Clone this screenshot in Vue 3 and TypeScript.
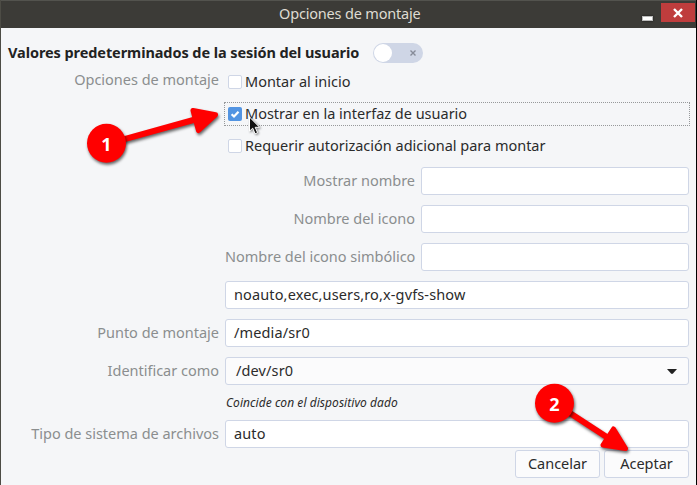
<script setup lang="ts">
import { ref } from 'vue'

interface Option { label: string; checked: boolean; focused: boolean }

const options = ref<Option[]>([
  { label: 'Montar al inicio', checked: false, focused: false },
  { label: 'Mostrar en la interfaz de usuario', checked: true, focused: true },
  { label: 'Requerir autorización adicional para montar', checked: false, focused: false },
])

const names = ['Mostrar nombre', 'Nombre del icono', 'Nombre del icono simbólico']
</script>

<template>
  <main class="window">
    <header class="titlebar">
      <h1 class="title">Opciones de montaje</h1>
      <span class="minimize"></span>
      <button class="close" type="button">
        <svg width="10" height="10" viewBox="0 0 10 10"><path d="M1 1 9 9M9 1 1 9" stroke="#fff" stroke-width="2.4" /></svg>
      </button>
    </header>

    <section class="defaults">
      <strong class="heading">Valores predeterminados de la sesión del usuario</strong>
      <span class="switch">
        <span class="knob"></span>
        <svg class="off" width="6" height="6" viewBox="0 0 6 6"><path d="M.5 .5 5.5 5.5M5.5 .5 .5 5.5" stroke="#868b98" stroke-width="1.4" /></svg>
      </span>
    </section>

    <section class="form">
      <div class="label top">Opciones de montaje</div>
      <div class="options">
        <div v-for="o in options" :key="o.label" class="option" :class="{ focused: o.focused }">
          <span class="box" :class="{ on: o.checked }">
            <svg v-if="o.checked" width="14" height="14" viewBox="0 0 14 14"><path d="M3.6 7.2 6 9.5 10.5 4.7" fill="none" stroke="#fff" stroke-width="2.2" /></svg>
          </span>
          <span class="caption">{{ o.label }}</span>
        </div>
      </div>

      <div class="names">
        <template v-for="n in names" :key="n">
          <div class="label">{{ n }}</div>
          <div class="entry"></div>
        </template>
      </div>

      <div class="entry wide">noauto,exec,users,ro,x-gvfs-show</div>

      <div class="label">Punto de montaje</div>
      <div class="entry">/media/sr0</div>

      <div class="label">Identificar como</div>
      <div class="entry combo">
        <span>/dev/sr0</span>
        <svg width="10" height="5" viewBox="0 0 10 5"><path d="M0 0h10L6 4.5Q5 5.4 4 4.5Z" fill="#222" /></svg>
      </div>

      <em class="hint">Coincide con el dispositivo dado</em>

      <div class="label">Tipo de sistema de archivos</div>
      <div class="entry">auto</div>
    </section>

    <footer class="actions">
      <button class="btn" type="button">Cancelar</button>
      <button class="btn" type="button">Aceptar</button>
    </footer>

    <svg class="overlay" width="697" height="485" viewBox="0 0 697 485">
      <path class="cursor" d="M249.5 117v14.2l3.2-3 2.4 5.6 2.500-1.100-2.400-5.400h4.400z" />
      <g class="mark">
        <path class="shaft" d="M120 140.300 197 119" />
        <path class="head" d="M193 110.500 215.500 114.800 198.500 130.500Z" />
      </g>
      <g class="mark">
        <path class="shaft" d="M566 410.500 609 438.500" />
        <path class="head" d="M613.500 429 625.500 448.500 603 445Z" />
      </g>
      <g class="mark"><circle cx="106.500" cy="143.300" r="19.500" /></g>
      <g class="mark"><circle cx="554.500" cy="403.300" r="19.500" /></g>
      <text class="num" x="106.300" y="150.500">1</text>
      <text class="num" x="554.300" y="410.500">2</text>
    </svg>
  </main>
</template>

<style>
body { overflow: hidden; }
</style>

<style scoped>
* { box-sizing: border-box; }
.window {
  position: relative;
  width: 697px;
  height: 485px;
  background: #f5f6f8;
  border-left: 1px solid #4d4c45;
  border-right: 1px solid #000;
  color: #2b2b2b;
  font: 14.5px/20px "Noto Sans", sans-serif;
  letter-spacing: -0.01px;
  white-space: nowrap;
}
.titlebar {
  display: grid;
  grid-template-columns: 271px 155px 1fr auto auto;
  align-items: start;
  height: 28px;
  background: #3c3b37;
  border-top: 1px solid #53534e;
}
.title { grid-column: 2; margin: 2px 0 0 7px; font-size: 14.5px; line-height: 20px; font-weight: 400; letter-spacing: -0.18px; color: #dfdbd2; }
.minimize { grid-column: 4; width: 11px; height: 5px; margin: 15px 8px 0 0; background: #fff; border: 1px solid #bbb; box-shadow: 0 0 2px #111; }
.close {
  display: flex;
  align-items: center;
  justify-content: center;
  width: 34px;
  height: 19px;
  margin: 2px 1px 0 0;
  padding: 0;
  border: 0;
  background: #bf3d3d;
}
.defaults { display: flex; align-items: center; gap: 12px; height: 20px; margin: 15px 0 7px 7px; }
.heading { width: 353px; padding-bottom: 2px; font-weight: 700; letter-spacing: -0.08px; color: #222; }
.switch { display: flex; align-items: center; justify-content: space-between; width: 50px; height: 20px; padding: 1px 7px 1px 1px; border-radius: 10px; background: #cfd6e6; }
.knob { width: 18px; height: 18px; border-radius: 50%; background: #fff; }
.form { display: grid; grid-template-columns: 210px 464px; column-gap: 6px; row-gap: 10px; padding-left: 8px; }
.label { color: #8b8e8f; text-align: right; line-height: 27px; }
.label.top { line-height: 18px; }
.options { display: flex; flex-direction: column; gap: 8px; margin: 0 -1px -1px; }
.option { display: flex; align-items: center; gap: 3px; height: 24px; padding-left: 3px; border: 1px dotted transparent; }
.option.focused { border-color: #97999b; }
.caption { padding-bottom: 2px; }
.box { flex: none; display: block; width: 14px; height: 14px; border: 1px solid #cfd6e6; border-radius: 2px; background: #fff; }
.box.on { border: 0; background: #5294e2; }
.box svg { display: block; }
.names { grid-column: 2; display: grid; grid-template-columns: 190px 268px; gap: 10px 6px; }
.entry { height: 28px; padding: 0 8px; border: 1px solid #cfd6e6; border-radius: 3px; background: #fff; line-height: 24px; letter-spacing: 0.13px; }
.wide, .hint { grid-column: 2; }
.combo { display: flex; align-items: center; justify-content: space-between; padding: 0 11px 0 10px; background: #fbfbfc; }
.combo span { padding-bottom: 2px; }
.hint { height: 15px; margin-left: 1px; font-size: 12px; line-height: 15px; letter-spacing: 0.05px; }
.actions { display: flex; justify-content: flex-end; gap: 4px; margin: 2px 7px 0 0; }
.btn { width: 85px; height: 28px; padding: 0 0 2px; border: 1px solid #cfd6e6; border-radius: 3px; background: #fbfbfc; color: #2b2b2b; font: inherit; letter-spacing: inherit; }
.overlay { position: absolute; top: 0; left: -1px; pointer-events: none; }
.cursor { fill: #111; stroke: #fff; stroke-width: 1; filter: drop-shadow(1px 1px 1px #0007); }
.mark { fill: #f00; filter: drop-shadow(1.5px 2px 1.5px #0009); }
.shaft { stroke: #f00; stroke-width: 6; }
.head { stroke: #f00; stroke-width: 5; stroke-linejoin: round; }
.num { fill: #fff; font: 700 18px "Noto Sans", sans-serif; text-anchor: middle; letter-spacing: 0; }
</style>
